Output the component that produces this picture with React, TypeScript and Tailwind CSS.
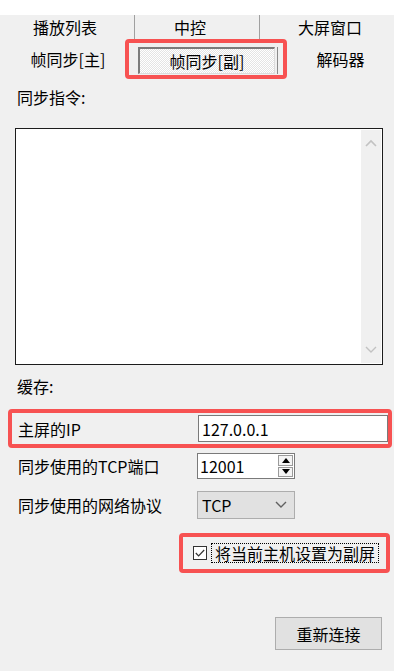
import React from "react";

const RED = "border-[#f75252]";

function ChevronUp() {
  return (
    <svg width="12" height="8" viewBox="0 0 12 8">
      <path d="M1 7 L6 2 L11 7" fill="none" stroke="#c2c2c2" strokeWidth="1.6" />
    </svg>
  );
}
function ChevronDown({ color = "#c2c2c2" }: { color?: string }) {
  return (
    <svg width="12" height="8" viewBox="0 0 12 8">
      <path d="M1 1 L6 6 L11 1" fill="none" stroke={color} strokeWidth="1.4" />
    </svg>
  );
}

export default function App() {
  return (
    <div
      className="w-[394px] h-[671px] bg-[#f0f0f0] text-black text-[16px] overflow-hidden flex flex-col"
      style={{ fontFamily: '"Noto Sans CJK SC", "Microsoft YaHei", sans-serif' }}
    >
      {/* white strip */}
      <div className="h-[15px] bg-white shrink-0" />

      {/* tab row 1 */}
      <div className="flex h-[24px] shrink-0 leading-[24px]">
        <div className="w-[135px] border-r border-[#a0a0a0] flex justify-center pr-[4px]">播放列表</div>
        <div className="w-[125px] border-r border-[#a0a0a0] flex justify-center pr-[14px]">中控</div>
        <div className="flex-1 flex justify-center pl-[6px]">大屏窗口</div>
      </div>

      {/* tab row 2 */}
      <div className="flex h-[40px] items-center shrink-0">
        <div className="w-[125px] flex justify-center pl-[11px] leading-[20px]">帧同步[主]</div>
        <div className={`w-[162px] h-[40px] border-[4px] ${RED} rounded-[4px] flex pl-[9px] pt-[4px]`}>
          <div className="w-[137px] h-[27px] border-t-2 border-l-2 border-t-[#7c7c7c] border-l-[#7c7c7c] border-b border-r border-b-[#dcdcdc] border-r-[#dcdcdc] bg-[repeating-conic-gradient(#ffffff_0_25%,#e4e4e4_0_50%)] bg-size-[2px_2px] flex items-center justify-center leading-[20px]">
            帧同步[副]
          </div>
          <div className="ml-[2px] w-px h-[27px] bg-[#8a8a8a]" />
        </div>
        <div className="flex-1 flex justify-center leading-[20px]">解码器</div>
      </div>

      {/* 同步指令 */}
      <div className="mt-[7px] h-[22px] leading-[22px] pl-[17px] shrink-0">同步指令:</div>

      {/* textarea */}
      <div className="mt-[20px] ml-[15px] w-[368px] h-[237px] border border-[#1c1c1c] bg-white flex justify-end p-px shrink-0">
        <div className="w-[20px] h-full bg-[#f0f0f0] flex flex-col items-center justify-between pt-[9px] pb-[9px]">
          <ChevronUp />
          <ChevronDown />
        </div>
      </div>

      {/* 缓存 */}
      <div className="mt-[10px] h-[22px] leading-[22px] pl-[17px] shrink-0">缓存:</div>

      {/* 主屏的IP */}
      <div className={`mt-[12px] ml-[8px] w-[384px] h-[39px] border-[4px] ${RED} rounded-[4px] flex items-center pl-[6px] shrink-0`}>
        <div className="w-[182px] leading-[20px]">主屏的IP</div>
        <div className="w-[192px] h-[27px] border border-[#7a7a7a] bg-white flex items-center pl-[3px] leading-[20px]">
          127.0.0.1
        </div>
      </div>

      {/* TCP port */}
      <div className="mt-[5px] flex items-center h-[26px] pl-[18px] shrink-0">
        <div className="w-[179px] leading-[20px]">同步使用的TCP端口</div>
        <div className="w-[98px] h-[26px] border border-[#7a7a7a] bg-white flex items-center pl-[2px] leading-[20px]">
          <div className="flex-1">12001</div>
          <div className="w-[15px] h-[22px] mr-[1px] flex flex-col gap-px">
            <div className="flex-1 border border-[#9a9a9a] bg-[#f4f4f4] flex items-center justify-center">
              <svg width="8" height="5" viewBox="0 0 8 5"><path d="M0 5 L4 0 L8 5 Z" fill="#000" /></svg>
            </div>
            <div className="flex-1 border border-[#9a9a9a] bg-[#f4f4f4] flex items-center justify-center">
              <svg width="8" height="5" viewBox="0 0 8 5"><path d="M0 0 L4 5 L8 0 Z" fill="#000" /></svg>
            </div>
          </div>
        </div>
      </div>

      {/* protocol */}
      <div className="mt-[12px] flex items-center h-[28px] pl-[18px] shrink-0">
        <div className="w-[179px] leading-[20px]">同步使用的网络协议</div>
        <div className="w-[98px] h-[28px] border border-[#adadad] bg-[#e1e1e1] flex items-center pl-[4px] pr-[7px] leading-[20px]">
          <div className="flex-1">TCP</div>
          <ChevronDown color="#606060" />
        </div>
      </div>

      {/* checkbox */}
      <div className={`mt-[14px] ml-[179px] w-[211px] h-[40px] border-[4px] ${RED} rounded-[4px] flex items-center pl-[10px] shrink-0`}>
        <div className="w-[14px] h-[14px] border border-[#333333] bg-white flex items-center justify-center">
          <svg width="10" height="8" viewBox="0 0 10 8">
            <path d="M0.8 4 L3.6 6.8 L9.2 1" fill="none" stroke="#333" strokeWidth="1.2" />
          </svg>
        </div>
        <div className="ml-[4px] h-[20px] border border-dotted border-black flex items-center px-[3px] leading-[18px]">
          将当前主机设置为副屏
        </div>
      </div>

      {/* button */}
      <div className="mt-[44px] ml-[275px] w-[107px] h-[33px] border border-[#adadad] bg-[#e1e1e1] flex items-center justify-center leading-[20px] shrink-0">
        重新连接
      </div>
    </div>
  );
}
